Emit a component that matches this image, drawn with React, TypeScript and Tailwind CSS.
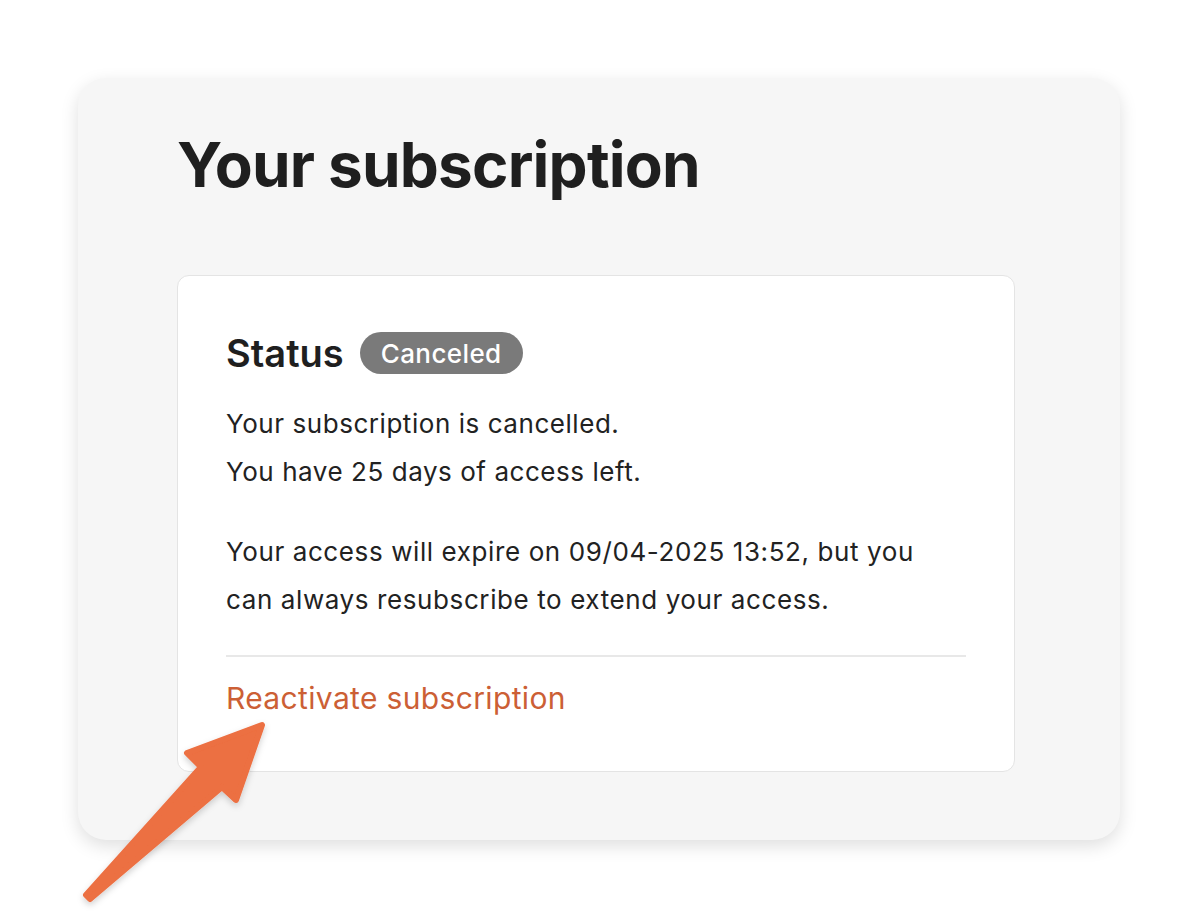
export default function App() {
  return (
    <div
      className="relative min-h-[918px] w-full bg-white"
      style={{ fontFamily: "Inter, 'Noto Sans', sans-serif" }}
    >
      <div className="pt-[78px] pl-[78px]">
        <div className="w-[1042px] rounded-[28px] bg-[#f6f6f6] pl-[99px] pr-[105px] pt-[56px] pb-[68px] shadow-[0_6px_18px_rgba(0,0,0,0.13)]">
          <h1 className="text-[62px] font-bold leading-[62px] text-[#1f1f1f] tracking-[-0.8px]">
            Your subscription
          </h1>

          <div className="mt-[79px] w-[838px] rounded-[12px] border border-[#e4e4e4] bg-white px-[48px] pt-[56px] pb-[53px]">
            <div className="flex items-center gap-[16px]">
              <span className="text-[38px] font-semibold leading-[42px] text-[#1f1f1f]">Status</span>
              <span className="flex h-[42px] items-center rounded-full bg-[#7a7a7a] px-[21px] text-[26px] font-medium tracking-[0.4px] text-white">
                Canceled
              </span>
            </div>

            <div className="mt-[26px] text-[26px] leading-[48px] tracking-[0.55px] text-[#222222]">
              <p>Your subscription is cancelled.</p>
              <p>You have 25 days of access left.</p>
            </div>

            <p className="mt-[32px] text-[26px] leading-[48px] tracking-[0.6px] text-[#222222]">
              Your access will expire on 09/04-2025 13:52, but you
              <br />
              can always resubscribe to extend your access.
            </p>

            <div className="mt-[31px] h-[2px] bg-[#e8e8e8]" />

            <a href="#" className="mt-[21px] block text-[30px] leading-[40px] tracking-[0.35px] text-[#cc5f35]">
              Reactivate subscription
            </a>
          </div>
        </div>
      </div>

      {/* annotation arrow */}
      <svg
        className="pointer-events-none absolute left-0 top-0"
        width="1198"
        height="918"
        viewBox="0 0 1198 918"
      >
        <defs>
          <filter id="arrowShadow" x="-20%" y="-20%" width="140%" height="140%">
            <feDropShadow dx="0" dy="3" stdDeviation="3" floodColor="#000" floodOpacity="0.18" />
          </filter>
        </defs>
        <path
          d="M201 767 L187 753 L262 725 L236 800 L222 787 L90 899 L86 895 Z"
          fill="#ec6f42"
          stroke="#ec6f42"
          strokeWidth="6"
          strokeLinejoin="round"
          filter="url(#arrowShadow)"
        />
      </svg>
    </div>
  )
}
